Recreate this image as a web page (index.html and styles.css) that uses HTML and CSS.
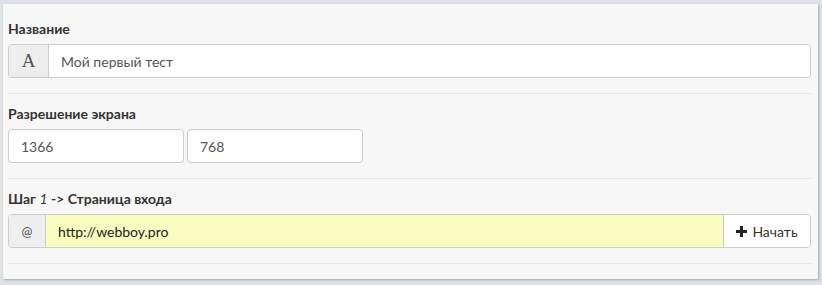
FILE: index.html
```html
<!DOCTYPE html>
<html lang="ru">
<head>
<meta charset="utf-8">
<link rel="stylesheet" href="styles.css">
</head>
<body>
<div class="panel">
  <div class="group first">
    <label class="lbl">Название</label>
    <div class="igroup">
      <span class="addon addon-a">A</span>
      <div class="field">Мой первый тест</div>
    </div>
  </div>
  <div class="group">
    <label class="lbl">Разрешение экрана</label>
    <div class="pair">
      <div class="field single">1366</div>
      <div class="field single">768</div>
    </div>
  </div>
  <div class="group">
    <label class="lbl">Шаг <i>1</i> -&gt; Страница входа</label>
    <div class="igroup">
      <span class="addon addon-at">@</span>
      <div class="field yellow">http://webboy.pro</div>
      <span class="btn"><svg class="plus" width="11" height="11" viewBox="0 0 11 11"><path d="M4 0h3v4h4v3H7v4H4V7H0V4h4z" fill="#222"/></svg>Начать</span>
    </div>
  </div>
</div>
</body>
</html>
```
FILE: styles.css
```css
html, body { margin: 0; padding: 0; }
body {
  background: #dde1e5;
  font-family: Lato, "Open Sans", sans-serif;
  padding: 4px 4px 6px 3px;
}
.panel {
  background: #f7f7f7;
  box-shadow: 1px 1px 2px rgba(0,0,0,0.25);
  padding: 16px 7px 0 5px;
  width: 815px;
  height: 275px;
  box-sizing: border-box;
}
.group {
  border-bottom: 1px solid #e6e6e6;
  padding-bottom: 15px;
  padding-top: 11px;
}
.group.first { padding-top: 0; }
.lbl {
  display: block;
  font-weight: bold;
  font-size: 14px;
  color: #333;
  line-height: 18px;
  margin-bottom: 6px;
}
.lbl i { font-weight: normal; }
.igroup {
  display: flex;
  height: 34px;
  box-sizing: border-box;
  border: 1px solid #ccc;
  border-radius: 4px;
  overflow: hidden;
  background: #fff;
}
.addon {
  background: #eee;
  border-right: 1px solid #ccc;
  color: #555;
  display: flex;
  align-items: center;
  justify-content: center;
}
.addon-a {
  width: 39px;
  font-family: "Liberation Serif", "DejaVu Serif", serif;
  font-size: 19px;
}
.addon-at {
  width: 36px;
  font-size: 13px;
}
.field {
  flex: 1;
  display: flex;
  align-items: center;
  padding: 0 12px;
  font-size: 14px;
  color: #555;
  background: #fff;
}
.field.yellow { background: #fafdbf; color: #222; }
.pair { display: flex; gap: 3px; }
.field.single {
  flex: 0 0 auto;
  width: 176px;
  height: 34px;
  box-sizing: border-box;
  border: 1px solid #ccc;
  border-radius: 4px;
}
.btn {
  width: 87px;
  box-sizing: border-box;
  border-left: 1px solid #ccc;
  display: flex;
  align-items: center;
  justify-content: center;
  gap: 5px;
  font-size: 14px;
  color: #333;
  background: #fff;
}
.plus { display: block; }
```
